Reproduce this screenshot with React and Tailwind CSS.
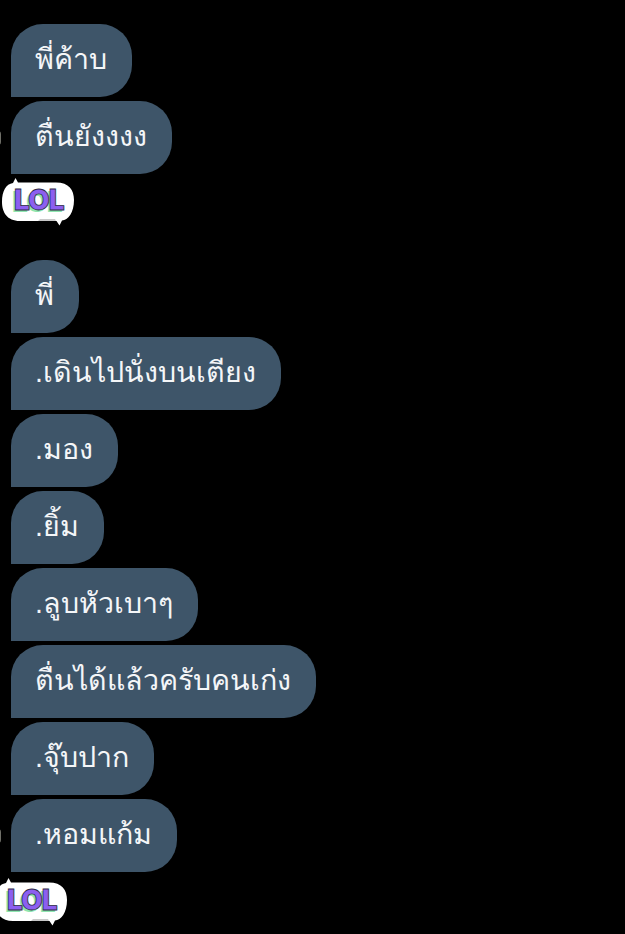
const topMessages = ['พี่ค้าบ', 'ตื่นยังงงง'];
const bottomMessages = [
  'พี่',
  '.เดินไปนั่งบนเตียง',
  '.มอง',
  '.ยิ้ม',
  '.ลูบหัวเบาๆ',
  'ตื่นได้แล้วครับคนเก่ง',
  '.จุ๊บปาก',
  '.หอมแก้ม',
];

const Bubble = ({ text, avatar }) => (
  <div className="relative pl-[11px]">
    {avatar && <div className="absolute left-[-5px] top-[30px] h-[14px] w-[6px] rounded-full bg-[#6f6f68]" />}
    <div className="flex h-[73px] w-fit items-center rounded-[32px] rounded-bl-none bg-[#3e5569] pr-[25px] pl-[24px] pb-[2px] text-[28.6px] leading-none text-[#f4f6f8]">
      {text}
    </div>
  </div>
);

const Sticker = ({ className }) => (
  <div className={`relative h-[48px] w-[76px] ${className}`}>
    <svg viewBox="0 0 76 48" className="absolute inset-0 h-full w-full">
      <path
        d="M13 5 L15.5 0 L18 4.5 L56 4.5 C69 4.5 74 12 74 22 C74 35 68 42 62 42.5 L59.5 47.5 L56.5 43 L20 43 C7 43 2 34 2 24 C2 13 6 6 13 5 Z"
        fill="#fff"
      />
      <path d="M38 43 L56 43 L55 41 L40 41 Z" fill="#c8c8c8" />
    </svg>
    <span className="absolute left-[14px] top-[8px] text-[28px] leading-[28px] font-black tracking-[-1px] text-[#8c5ff0] [-webkit-text-stroke:0.8px_#2f2c44] [font-family:'Inter',sans-serif] [text-shadow:-2px_2px_0_#8fe6b0]">
      LOL
    </span>
  </div>
);

const App = () => (
  <div className="h-[934px] w-[625px] overflow-hidden bg-black pt-[24px] [font-family:'Liberation_Sans',sans-serif]">
    <div className="flex flex-col gap-[4px]">
      {topMessages.map((m, i) => (
        <Bubble key={m} text={m} avatar={i === 1} />
      ))}
    </div>
    <Sticker className="mt-[4px]" />
    <div className="mt-[34px] flex flex-col gap-[4px]">
      {bottomMessages.map((m, i) => (
        <Bubble key={m} text={m} avatar={i === bottomMessages.length - 1} />
      ))}
    </div>
    <Sticker className="mt-[6px] ml-[-7px]" />
  </div>
);

export default App;
